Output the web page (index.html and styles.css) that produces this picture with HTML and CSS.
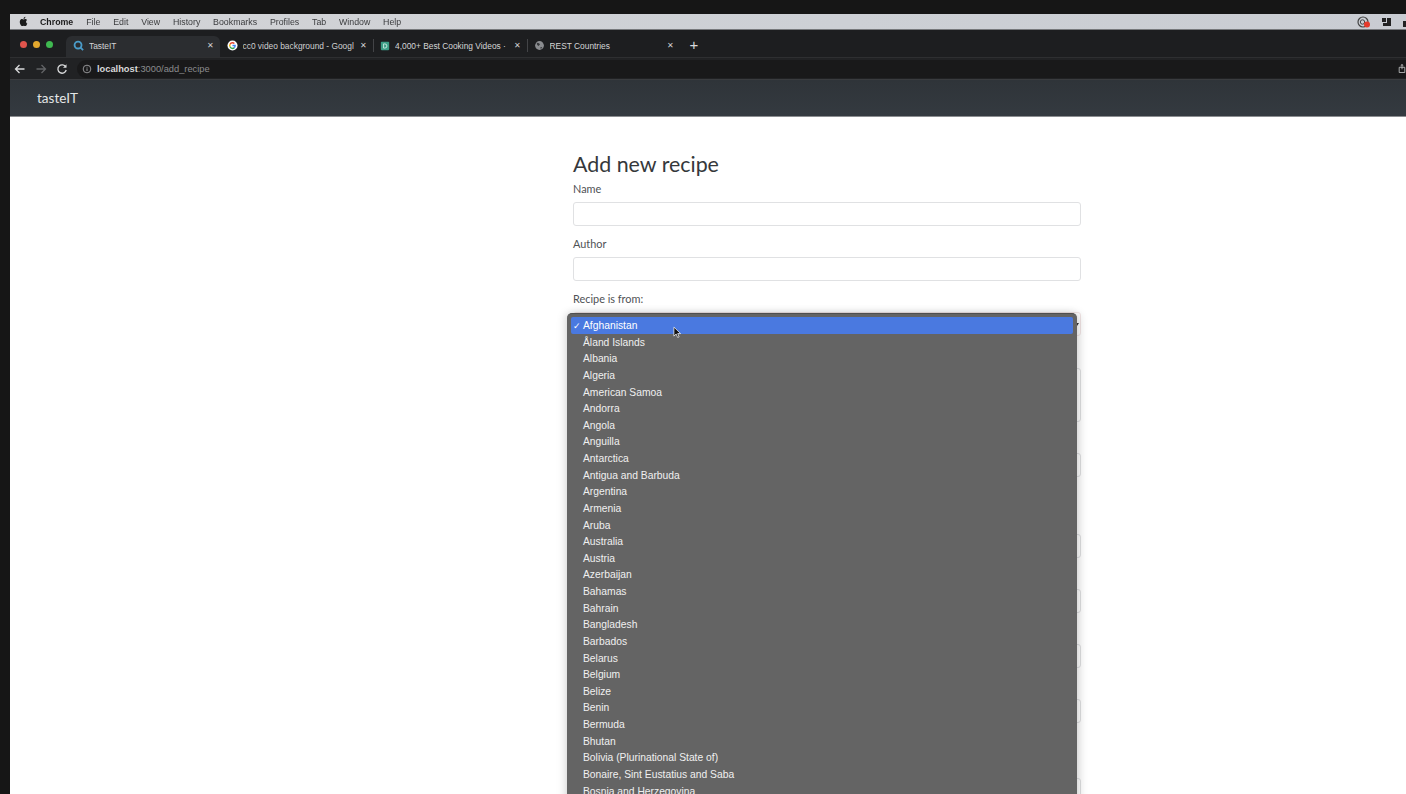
FILE: index.html
```html
<!DOCTYPE html>
<html lang="en">
<head>
  <meta charset="UTF-8" />
  <title>tasteIT - Add new recipe</title>
  <link rel="stylesheet" href="styles.css">
</head>
<body>
  <div class="screen">
    <div class="menubar">
      <svg class="apple" viewBox="0 0 24 24" width="11" height="11"><path d="M17.6 12.7c0-2.6 2.100-3.800 2.200-3.900-1.200-1.800-3.100-2-3.700-2-1.600-.2-3.100.9-3.900.9s-2-.9-3.300-.9c-1.700 0-3.300 1-4.200 2.500-1.800 3.100-.5 7.700 1.300 10.200.9 1.200 1.900 2.600 3.200 2.500 1.300-.1 1.800-.8 3.300-.8s2 .8 3.300.8c1.400 0 2.300-1.200 3.100-2.500 1-1.400 1.400-2.800 1.400-2.900-.1 0-2.700-1-2.700-3.900zM15.100 5c.7-.9 1.200-2 1-3.200-1 0-2.200.7-2.900 1.500-.6.700-1.200 1.900-1 3 1.100.1 2.200-.5 2.900-1.300z" fill="#1b1b1b"/></svg>
      <span class="menu-app">Chrome</span>
      <span class="menu-item">File</span>
      <span class="menu-item">Edit</span>
      <span class="menu-item">View</span>
      <span class="menu-item">History</span>
      <span class="menu-item">Bookmarks</span>
      <span class="menu-item">Profiles</span>
      <span class="menu-item">Tab</span>
      <span class="menu-item">Window</span>
      <span class="menu-item">Help</span>
      <div class="status-icons">
        <svg viewBox="0 0 14 12" width="14" height="12"><circle cx="6" cy="6" r="5" fill="none" stroke="#444" stroke-width="1.200"/><circle cx="5.500" cy="6" r="2.200" fill="none" stroke="#444"/><circle cx="10" cy="8.500" r="3" fill="#e5392b"/></svg>
        <svg viewBox="0 0 10 10" width="10" height="10"><rect x="0" y="1" width="4" height="4" fill="#222"/><path d="M5 1h4v8H1V6h4z" fill="#222"/></svg>
        <svg viewBox="0 0 10 10" width="10" height="10"><rect x="3" y="0" width="4" height="4" fill="#222"/><rect x="0" y="4" width="9" height="6" fill="#222"/></svg>
      </div>
    </div>

    <div class="tabstrip">
      <div class="traffic">
        <span class="dot dot-red"></span>
        <span class="dot dot-yellow"></span>
        <span class="dot dot-green"></span>
      </div>
      <div class="tab tab-active">
        <svg class="favicon" viewBox="0 0 12 12"><circle cx="5.500" cy="5.500" r="3.800" fill="none" stroke="#4a9cc9" stroke-width="2"/><path d="M8 8l3 3" stroke="#4a9cc9" stroke-width="2"/></svg>
        <span class="tab-title">TasteIT</span>
        <span class="tab-close">✕</span>
      </div>
      <div class="tab">
        <svg class="favicon" viewBox="0 0 12 12"><circle cx="6" cy="6" r="5.500" fill="#fff"/><path d="M6 2.300a3.700 3.700 0 0 1 2.600 1L7.500 4.400A2.200 2.200 0 0 0 3.900 5.300L2.600 4.300A3.700 3.700 0 0 1 6 2.300z" fill="#e5452f"/><path d="M2.600 4.300l1.300 1a2.200 2.200 0 0 0 0 1.400L2.600 7.700a3.700 3.700 0 0 1 0-3.400z" fill="#f5b800"/><path d="M2.600 7.700l1.300-1A2.200 2.200 0 0 0 7.300 8l1.200 1A3.700 3.700 0 0 1 2.600 7.700z" fill="#34a853"/><path d="M6 5.300h3.600c.2 1.300-.2 2.700-1.100 3.700L7.300 8c.4-.3.600-.7.700-1.200H6z" fill="#4285f4"/></svg>
        <span class="tab-title tab-title-fade">cc0 video background - Googl</span>
        <span class="tab-close">✕</span>
      </div>
      <div class="tab tab-sep">
        <svg class="favicon favicon-small" viewBox="0 0 12 12"><rect x="1" y="1" width="10" height="10" rx="1" fill="#3c9d86"/><path d="M4.300 3.500v5h1.500a2.500 2.500 0 0 0 0-5z" fill="none" stroke="#d8f2ea"/></svg>
        <span class="tab-title">4,000+ Best Cooking Videos ·</span>
        <span class="tab-close">✕</span>
      </div>
      <div class="tab tab-sep">
        <svg class="favicon" viewBox="0 0 12 12"><circle cx="6" cy="6" r="4.800" fill="#8a8c8f"/><path d="M3 3l2.500.5L6.500 5 5 6.500 3.500 5.500zM7 7.500l2 .3-1.600 2.300z" fill="#35373a"/></svg>
        <span class="tab-title">REST Countries</span>
        <span class="tab-close">✕</span>
      </div>
      <span class="tab-new">+</span>
    </div>

    <div class="toolbar">
      <svg class="nav-icon" viewBox="0 0 12 12"><path d="M10.500 6h-9M5.500 2l-4 4 4 4" fill="none" stroke="#d9dadb" stroke-width="1.300"/></svg>
      <svg class="nav-icon" viewBox="0 0 12 12"><path d="M1.500 6h9M6.500 2l4 4-4 4" fill="none" stroke="#626466" stroke-width="1.300"/></svg>
      <svg class="nav-icon" viewBox="0 0 12 12"><path d="M9.800 4A4.200 4.200 0 1 0 10.200 7" fill="none" stroke="#d9dadb" stroke-width="1.300"/><path d="M10.500 1.200v3.500H7z" fill="#d9dadb"/></svg>
      <div class="urlbar">
        <svg class="info-icon" viewBox="0 0 12 12"><circle cx="6" cy="6" r="4.600" fill="none" stroke="#a9abad" stroke-width="1"/><path d="M6 5.200v3.200M6 3.400v1" stroke="#a9abad" stroke-width="1"/></svg>
        <span class="url-host">localhost</span><span class="url-rest">:3000/add_recipe</span>
      </div>
      <svg class="share-icon" viewBox="0 0 10 12"><path d="M1.500 4.500h7v6.500h-7zM5 7V1M3.300 2.600L5 1l1.700 1.600" fill="none" stroke="#c8c9ca" stroke-width="1"/></svg>
    </div>

    <nav class="navbar"><span class="brand">tasteIT</span></nav>

    <main class="page">
      <form class="recipe-form">
        <h1>Add new recipe</h1>
        <div class="field">
          <label>Name</label>
          <input type="text" class="control">
        </div>
        <div class="field">
          <label>Author</label>
          <input type="text" class="control">
        </div>
        <div class="field">
          <label>Recipe is from:</label>
          <div class="control control-select"><span class="select-arrow"></span></div>
        </div>
        <div class="field field-plain field-area">
          <div class="control control-area"></div>
        </div>
        <div class="field field-plain">
          <input type="text" class="control">
        </div>
        <div class="field field-plain field-gap-lg">
          <input type="text" class="control">
        </div>
        <div class="field field-plain">
          <input type="text" class="control">
        </div>
        <div class="field field-plain">
          <input type="text" class="control">
        </div>
        <div class="field field-plain">
          <input type="text" class="control">
        </div>
        <div class="field field-plain field-gap">
          <input type="text" class="control">
        </div>
      </form>

      <ul class="popup">
        <li class="popup-selected"><span class="check">✓</span>Afghanistan</li>
        <li>Åland Islands</li>
        <li>Albania</li>
        <li>Algeria</li>
        <li>American Samoa</li>
        <li>Andorra</li>
        <li>Angola</li>
        <li>Anguilla</li>
        <li>Antarctica</li>
        <li>Antigua and Barbuda</li>
        <li>Argentina</li>
        <li>Armenia</li>
        <li>Aruba</li>
        <li>Australia</li>
        <li>Austria</li>
        <li>Azerbaijan</li>
        <li>Bahamas</li>
        <li>Bahrain</li>
        <li>Bangladesh</li>
        <li>Barbados</li>
        <li>Belarus</li>
        <li>Belgium</li>
        <li>Belize</li>
        <li>Benin</li>
        <li>Bermuda</li>
        <li>Bhutan</li>
        <li>Bolivia (Plurinational State of)</li>
        <li>Bonaire, Sint Eustatius and Saba</li>
        <li>Bosnia and Herzegovina</li>
      </ul>

      <svg class="cursor" viewBox="0 0 10 14" width="9" height="13"><path d="M1 1v10l2.500-2.300L5.200 12.500l1.600-.7L5.200 8.200H8.500z" fill="#111" stroke="#fff" stroke-width=".8"/></svg>
    </main>
  </div>
</body>
</html>
```

FILE: styles.css
```css
* {
  margin: 0;
  padding: 0;
  box-sizing: border-box;
}

html, body {
  height: 794px;
  overflow: hidden;
  background: #111;
}

/* the reference is a soft video frame */
.screen {
  height: 794px;
  padding: 14px 0 0 10px;
  display: flex;
  flex-direction: column;
  background: #161616;
  font-family: "Liberation Sans", sans-serif;
  filter: blur(0.4px);
}

/* mac menu bar */
.menubar {
  height: 16px;
  flex: none;
  display: flex;
  align-items: center;
  padding-left: 8px;
  background: linear-gradient(90deg, #d2d3d6, #cdd0d5 60%, #c9ccd2);
  border-bottom: 1px solid #77797c;
  font-size: 8.800px;
  color: #3b3c3e;
}
.apple {
  flex: none;
  margin-right: 11px;
}
.menu-app {
  font-weight: bold;
  color: #1c1c1c;
  margin-right: 13px;
}
.menu-item {
  margin-right: 12.800px;
}
.status-icons {
  margin-left: auto;
  display: flex;
  align-items: center;
  gap: 11px;
  margin-right: -7px;
}

/* browser tabs */
.tabstrip {
  height: 27px;
  flex: none;
  display: flex;
  align-items: flex-end;
  background: #1d1e20;
  color: #d4d5d6;
  font-size: 8.400px;
}
.traffic {
  width: 56px;
  height: 27px;
  flex: none;
  display: flex;
  align-items: center;
  gap: 6px;
  padding: 1px 0 0 10px;
}
.dot {
  width: 7px;
  height: 7px;
  border-radius: 50%;
}
.dot-red { background: #e0544c; }
.dot-yellow { background: #e3a82e; }
.dot-green { background: #3fb950; }

.tab {
  width: 153.500px;
  height: 21px;
  flex: none;
  display: flex;
  align-items: center;
  padding: 0 6px 2px 7px;
  position: relative;
}
.tab-active {
  background: #2b2d30;
  border-radius: 6px 6px 0 0;
}
.tab-sep::before {
  content: "";
  position: absolute;
  left: 0;
  top: 3px;
  height: 13px;
  border-left: 1px solid #434447;
}
.favicon {
  width: 11px;
  height: 11px;
  flex: none;
  margin-right: 5px;
}
.favicon-small {
  width: 10px;
  height: 10px;
}
.tab-title {
  flex: 1;
  white-space: nowrap;
  overflow: hidden;
}
.tab-title-fade {
  color: #cfd0d1;
}
.tab-close {
  font-size: 8px;
  color: #cfd0d1;
  margin-left: 3px;
}
.tab-new {
  width: 28px;
  height: 21px;
  text-align: center;
  font-size: 15px;
  line-height: 18px;
  color: #d9dadb;
}

/* address bar */
.toolbar {
  height: 23px;
  flex: none;
  display: flex;
  align-items: center;
  padding-left: 4px;
  background: #212224;
  border-top: 1px solid #2e2f31;
  border-bottom: 1px solid #3a3c3f;
}
.nav-icon {
  width: 12px;
  height: 12px;
  flex: none;
  margin-right: 9px;
}
.urlbar {
  flex: 1;
  height: 18px;
  display: flex;
  align-items: center;
  padding-left: 5px;
  background: #19191a;
  border-radius: 9px 0 0 9px;
  font-size: 9.300px;
  color: #8b8c8e;
}
.info-icon {
  width: 10px;
  height: 10px;
  margin-right: 5px;
}
.url-host {
  color: #d9dadb;
  font-weight: bold;
}
.share-icon {
  position: absolute;
  right: 0;
  width: 8px;
  height: 11px;
}

.navbar {
  height: 37px;
  flex: none;
  display: flex;
  align-items: center;
  padding-left: 27px;
  background: linear-gradient(180deg, #2f3439, #343a40);
  border-bottom: 1px solid #8b8d90;
}
.brand {
  font-family: Lato, sans-serif;
  font-size: 13.500px;
  color: #e4e6e7;
}

/* page */
.page {
  flex: 1;
  position: relative;
  overflow: hidden;
  background: #fff;
  color: #4f5255;
}
.recipe-form {
  width: 508px;
  margin-left: 563px;
  padding-top: 35px;
  font-family: Lato, sans-serif;
}
h1 {
  font-size: 21.400px;
  font-weight: 400;
  line-height: 24px;
  color: #35383b;
}
label {
  display: block;
  height: 18px;
  line-height: 18px;
  margin-bottom: 4px;
  font-size: 10.900px;
}
.field {
  margin-top: 9px;
}
.field:first-of-type {
  margin-top: 4px;
}
.field-plain {
  padding-top: 22px;
}
.field-area {
  margin-top: 10px;
}
.field-gap-lg {
  margin-top: 35px;
}
.field-gap {
  margin-top: 33px;
}
.control {
  display: block;
  width: 100%;
  height: 24px;
  background: #fff;
  border: 1px solid #e0e1e3;
  border-radius: 3px;
}
.control-select {
  position: relative;
  border-color: #f3e6e6;
}
.select-arrow {
  position: absolute;
  right: 1px;
  top: 10px;
  border: 2px solid transparent;
  border-top: 3px solid #333;
  border-bottom: 0;
}
.control-area {
  height: 54px;
}

/* native select popup */
.popup {
  position: absolute;
  left: 557px;
  top: 196px;
  width: 510px;
  height: 520px;
  padding: 3px 4px 0;
  list-style: none;
  background: #646464;
  border-top: 1px solid #4f4f4f;
  border-radius: 5px 5px 0 0;
  box-shadow: 3px 0 8px rgba(0, 0, 0, 0.15), -3px 0 8px rgba(0, 0, 0, 0.1);
  font-family: "Liberation Sans", sans-serif;
  font-size: 10.300px;
  color: #f0f0f0;
}
.popup li {
  height: 16.640px;
  line-height: 18px;
  padding-left: 12px;
  position: relative;
  white-space: nowrap;
}
.popup .popup-selected {
  background: #4a79e0;
  border-radius: 2px;
  color: #fff;
}
.check {
  position: absolute;
  left: 2px;
  font-family: "DejaVu Sans", sans-serif;
  font-size: 9px;
}
.cursor {
  position: absolute;
  left: 663px;
  top: 209px;
}
```
